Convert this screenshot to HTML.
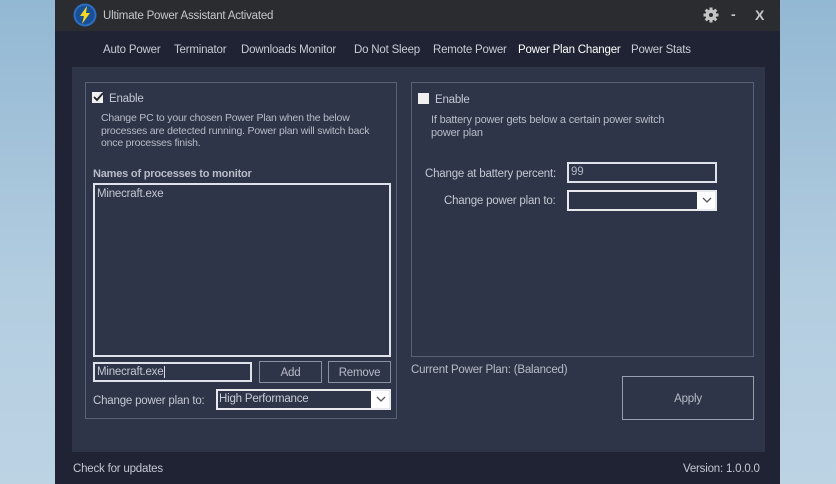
<!DOCTYPE html>
<html><head><meta charset="utf-8"><style>
*{margin:0;padding:0;box-sizing:border-box}
body{width:836px;height:484px;overflow:hidden;background:linear-gradient(180deg,#93b8d3 0%,#b3cde0 60%,#bcd3e4 100%);font-family:"Liberation Sans",sans-serif;font-size:11.5px;letter-spacing:-0.2px;color:#c4c8d2;position:relative}
.a{position:absolute;white-space:nowrap}
.t{margin-top:2px}
.win{left:55px;top:0;width:725px;height:484px;background:#1f2333}
.title{left:55px;top:0;width:725px;height:31px;background:#2a2c30}
.panel{left:72px;top:67px;width:693px;height:385px;background:#2e3548}
.bot{left:55px;top:452px;width:725px;height:32px;background:#1f2333}
.grp{border:1px solid #59607a}
.tab{top:44px;font-size:11.5px;color:#c8ccd6}
.box{border:2px solid #dfe2ea;background:#2e3548}
.btn{border:1px solid #8a90a4;text-align:center;color:#b8bcc8}
.sel{border:2px solid #e8eaf0;background:#fff}
.sel .in{position:absolute;left:0;top:0;bottom:0;right:18px;background:#2e3548;color:#c8ccd6;padding-left:1px;line-height:17px}
.chk{width:11px;height:11px;background:#f0f0f0}
.wrap{white-space:normal}
</style></head><body>
<div class="a win"></div>
<div class="a title"></div>
<svg class="a" style="left:73px;top:3px" width="24" height="24" viewBox="0 0 24 24"><circle cx="12" cy="12" r="11.5" fill="#2a6fc0"/><circle cx="12" cy="12" r="9.5" fill="#1b4f95"/><path d="M14 3 L7 13 L11 13 L9 21 L17 10 L13 10 Z" fill="#f5d820"/></svg>
<div class="a" style="left:103px;top:10px;font-size:11.5px;color:#c6c8cc">Ultimate Power Assistant Activated</div>
<svg class="a" style="left:703px;top:7px" width="16" height="16" viewBox="0 0 16 16"><g fill="#c4c4c4"><circle cx="8" cy="8" r="5.5"/><rect x="6.5" y="0.5" width="3" height="15"/><rect x="0.5" y="6.5" width="15" height="3"/><rect x="6.5" y="0.5" width="3" height="15" transform="rotate(45 8 8)"/><rect x="6.5" y="0.5" width="3" height="15" transform="rotate(-45 8 8)"/></g><circle cx="8" cy="8" r="2" fill="#2a2c30"/></svg>
<div class="a" style="left:731px;top:6px;font-size:14px;font-weight:bold;color:#c8c8c8">-</div>
<div class="a" style="left:755px;top:7px;font-size:14px;font-weight:bold;color:#c8c8c8">X</div>
<div class="a tab" style="left:103px">Auto Power</div>
<div class="a tab" style="left:174px">Terminator</div>
<div class="a tab" style="left:241px">Downloads Monitor</div>
<div class="a tab" style="left:354px">Do Not Sleep</div>
<div class="a tab" style="left:433px">Remote Power</div>
<div class="a tab" style="left:518px;color:#fff">Power Plan Changer</div>
<div class="a tab" style="left:631px">Power Stats</div>
<div class="a panel"></div>
<div class="a grp" style="left:85px;top:82px;width:312px;height:337px"></div>
<div class="a chk" style="left:92px;top:92px"></div>
<svg class="a" style="left:92px;top:91px" width="12" height="12" viewBox="0 0 12 12"><path d="M2 6 L5 9 L11 2" stroke="#222" stroke-width="1.8" fill="none"/></svg>
<div class="a t" style="left:109px;top:91px">Enable</div>
<div class="a wrap t" style="left:101px;top:110px;font-size:10.5px;line-height:12.5px;width:292px;color:#b8bcc8">Change PC to your chosen Power Plan when the below processes are detected running. Power plan will switch back once processes finish.</div>
<div class="a t" style="left:93px;top:166px;font-weight:bold;font-size:11px;color:#b8bcc8">Names of processes to monitor</div>
<div class="a box" style="left:93px;top:183px;width:298px;height:174px;padding:3px 2px;color:#c4c8d2">Minecraft.exe</div>
<div class="a box" style="left:93px;top:362px;width:159px;height:20px;padding:2px 2px;color:#c4c8d2">Minecraft.exe<span style="border-left:1px solid #ddd;margin-left:1px"></span></div>
<div class="a btn" style="left:259px;top:361px;width:63px;height:22px;line-height:23px">Add</div>
<div class="a btn" style="left:328px;top:361px;width:63px;height:22px;line-height:23px">Remove</div>
<div class="a t" style="left:93px;top:393px">Change power plan to:</div>
<div class="a sel" style="left:216px;top:389px;width:175px;height:21px"><div class="in">High Performance</div><svg class="a" style="right:3px;top:5px" width="10" height="7" viewBox="0 0 10 7"><path d="M1 1 L5 5 L9 1" stroke="#555" stroke-width="1.3" fill="none"/></svg></div>
<div class="a grp" style="left:411px;top:82px;width:343px;height:275px"></div>
<div class="a chk" style="left:418px;top:93px"></div>
<div class="a t" style="left:435px;top:92px">Enable</div>
<div class="a wrap t" style="left:431px;top:112px;font-size:11px;line-height:13px;width:262px;color:#b8bcc8">If battery power gets below a certain power switch power plan</div>
<div class="a t" style="left:425px;top:166px">Change at battery percent:</div>
<div class="a box" style="left:567px;top:162px;width:150px;height:21px;padding:2px 2px;color:#b0b4c0">99</div>
<div class="a t" style="left:444px;top:193px">Change power plan to:</div>
<div class="a sel" style="left:567px;top:190px;width:150px;height:21px"><div class="in"></div><svg class="a" style="right:3px;top:5px" width="10" height="7" viewBox="0 0 10 7"><path d="M1 1 L5 5 L9 1" stroke="#555" stroke-width="1.3" fill="none"/></svg></div>
<div class="a t" style="left:411px;top:362px;color:#b8bcc8">Current Power Plan: (Balanced)</div>
<div class="a btn" style="left:622px;top:376px;width:132px;height:44px;line-height:44px;border-color:#9aa0b2">Apply</div>
<div class="a bot"></div>
<div class="a t" style="left:73px;top:461px;color:#c4c8d2">Check for updates</div>
<div class="a t" style="left:683px;top:461px;color:#c4c8d2">Version: 1.0.0.0</div>
</body></html>
